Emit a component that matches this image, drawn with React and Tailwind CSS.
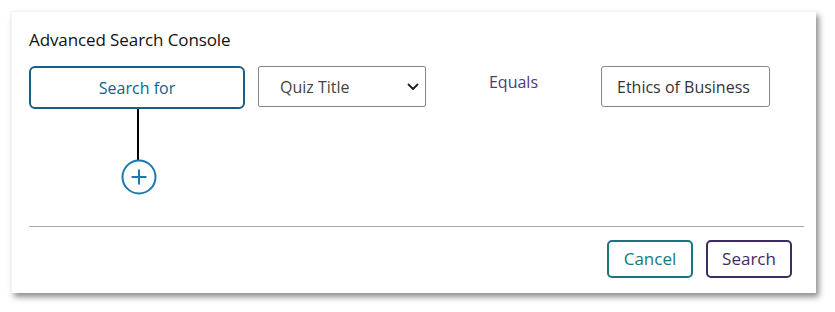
import React from 'react'

function Chevron() {
  return (
    <svg width="12" height="8" viewBox="0 0 12 8" fill="none">
      <path d="M1.5 1.5 L6 6 L10.5 1.5" stroke="#222" strokeWidth="1.8" strokeLinecap="round" strokeLinejoin="round" />
    </svg>
  )
}

function PlusCircle() {
  return (
    <svg width="36" height="36" viewBox="0 0 36 36" fill="none">
      <circle cx="18" cy="18" r="16.5" stroke="#1a7aad" strokeWidth="2" />
      <path d="M18 10.5 V25.5 M10.5 18 H25.5" stroke="#1a7aad" strokeWidth="2" />
    </svg>
  )
}

export default function App() {
  return (
    <div className="w-[835px] h-[312px] bg-white pt-[11px] pl-[11px]" style={{ fontFamily: '"Open Sans", Lato, sans-serif' }}>
      <div className="w-[805px] h-[282px] bg-white shadow-[3px_4px_6px_rgba(0,0,0,0.45)] border-t border-l border-gray-100 pl-[17px] pr-[11px] pt-[18px] flex flex-col">
        <h2 className="text-[17px] leading-[20px] text-[#111] h-[20px] tracking-[-0.1px]">Advanced Search Console</h2>

        <div className="mt-[16px] flex items-start gap-[13px]">
          <div className="w-[216px] flex flex-col items-center">
            <button className="w-[216px] h-[43px] border-2 border-[#1b5e84] rounded-[6px] text-[16px] text-[#135f8e]">
              Search for
            </button>
            <div className="w-[2px] h-[51px] bg-black ml-[1px]" />
            <div className="-mt-[1px] ml-[3px]">
              <PlusCircle />
            </div>
          </div>

          <div className="w-[168px] h-[41px] border border-[#888] rounded-[2px] flex items-center justify-between pl-[21px] pr-[6px]">
            <span className="text-[16px] text-[#444]">Quiz Title</span>
            <Chevron />
          </div>

          <div className="w-[149px] h-[32px] flex items-center justify-center">
            <span className="text-[16px] text-[#4b3b78]">Equals</span>
          </div>

          <div className="w-[169px] h-[41px] border border-[#888] rounded-[3px] flex items-center pl-[15px]">
            <span className="text-[16px] text-[#333]">Ethics of Business</span>
          </div>
        </div>

        <div className="mt-[31px] h-px bg-[#aaa] w-[775px]" />

        <div className="mt-[13px] flex justify-end gap-[13px] pr-[13px]">
          <button className="w-[86px] h-[38px] border-2 border-[#18767e] rounded-[5px] text-[17px] text-[#18767e]">
            Cancel
          </button>
          <button className="w-[86px] h-[38px] border-2 border-[#3e2b63] rounded-[5px] text-[17px] text-[#3e2b63]">
            Search
          </button>
        </div>
      </div>
    </div>
  )
}
